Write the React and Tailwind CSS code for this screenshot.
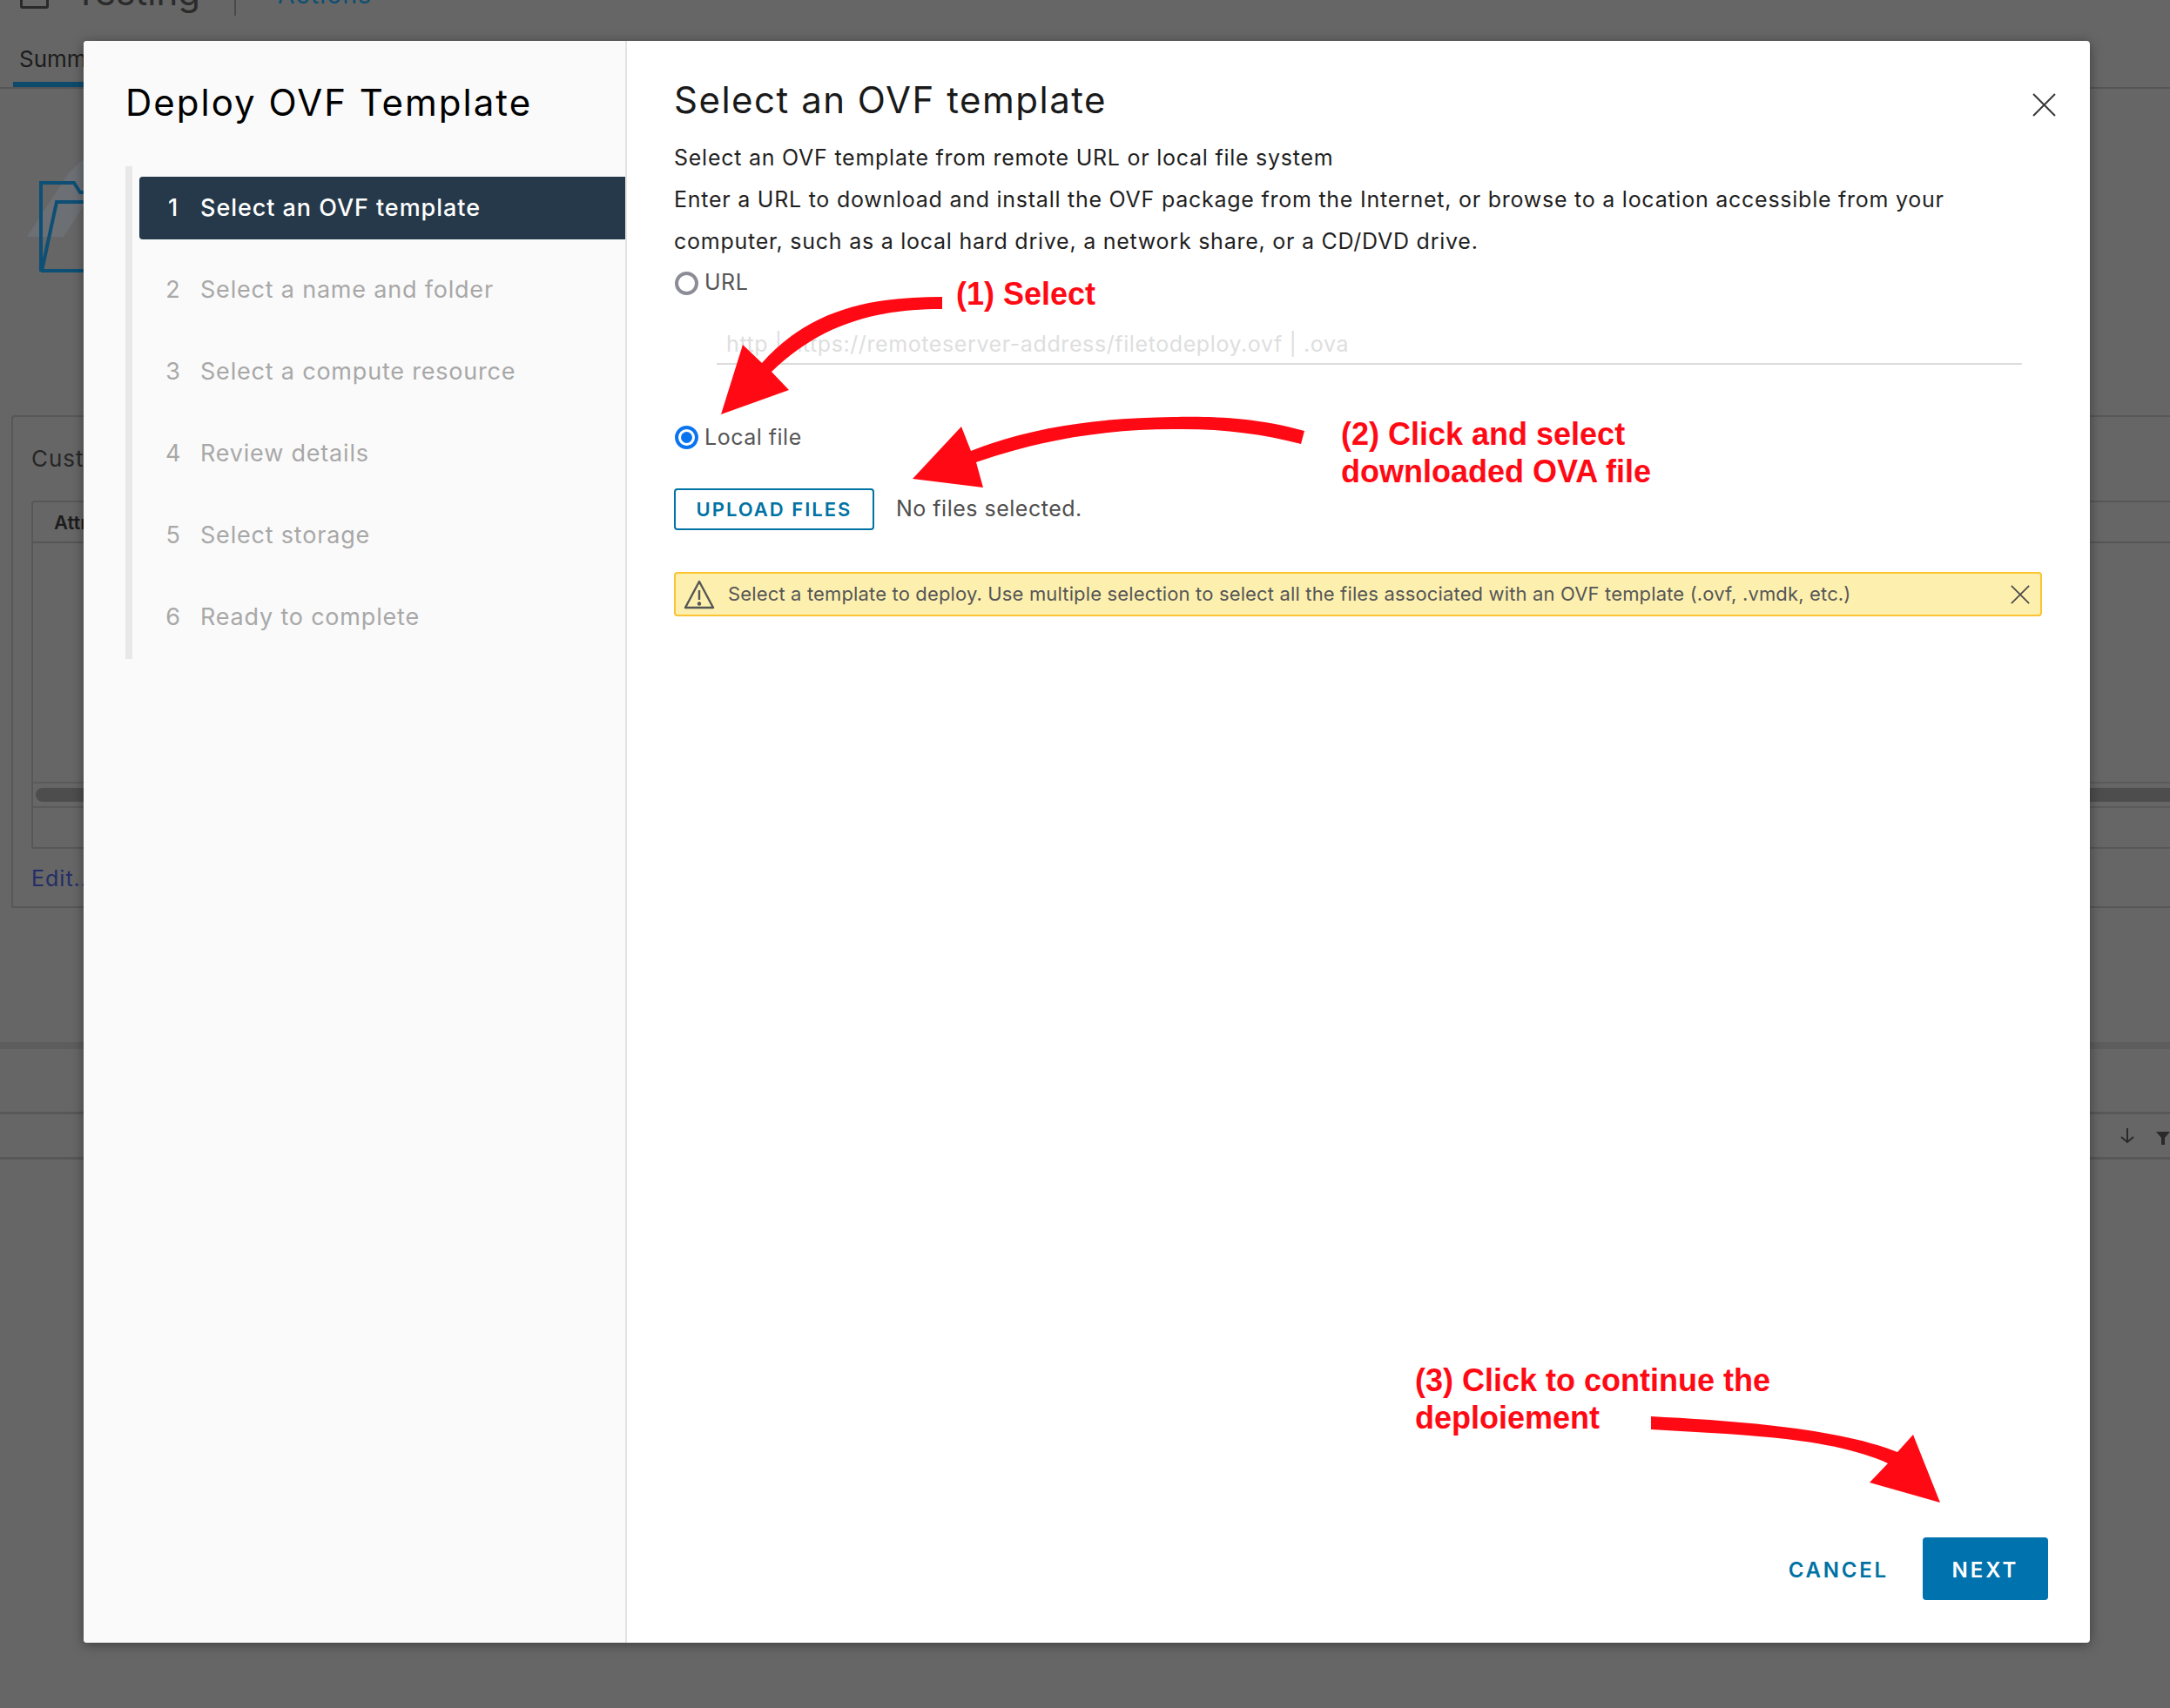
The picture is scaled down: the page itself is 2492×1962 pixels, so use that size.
import React from "react";

const font = "font-['Inter','Liberation_Sans',sans-serif]";

const steps = [
  "Select an OVF template",
  "Select a name and folder",
  "Select a compute resource",
  "Review details",
  "Select storage",
  "Ready to complete",
];

const CloseIcon = ({ className }) => (
  <svg viewBox="0 0 26 26" className={className} fill="none" stroke="currentColor" strokeWidth="2">
    <path d="M1 1 L25 25 M25 1 L1 25" />
  </svg>
);

const Background = () => (
  <div className="flex h-full flex-col text-[#1c1c1c]">
    <div className="flex h-[18px] items-end overflow-hidden pl-[23px]">
      <div className="mb-[8px] h-[40px] w-[33px] shrink-0 rounded-[3px] border-[3px] border-[#2a2a2a]" />
      <span className="mb-[7px] ml-[29px] text-[42px] leading-[40px] text-[#2b2b2b]">Testing</span>
      <div className="ml-[39px] h-full w-[2px] bg-[#4a4a4a]" />
      <span className="mb-[12px] ml-[48px] text-[28px] leading-[24px] tracking-[1.3px] text-[#0b4f73]">Actions</span>
    </div>
    <div className="h-[84px] border-b-2 border-[#555]">
      <div className="ml-[15px] flex h-[82px] w-[120px] items-center border-b-[6px] border-[#0d4a6b] pl-[7px] pt-[22px] text-[26px]">
        Summary
      </div>
    </div>
    <div className="h-[375px] pl-[30px] pt-[68px]">
      <svg viewBox="0 0 70 145" className="h-[145px] w-[70px]" fill="none" stroke="#0d4f75" strokeWidth="4">
        <path d="M1 102 L48 30 L68 10 L70 60 L43 102 Z" fill="#6c7074" stroke="none" />
        <path d="M17 142 V40 H55 L62 51 H70 M17 141 H70 M18 141 L35 62 H70" />
      </svg>
    </div>
    <div className="ml-[13px] flex h-[566px] flex-col rounded-tl-[4px] border-2 border-r-0 border-[#575757] pl-[21px]">
      <div className="h-[96px] pt-[28px] text-[26px] leading-[40px] tracking-[1px] text-[#262626]">Custom Attributes</div>
      <div className="flex h-[400px] flex-col rounded-tl-[4px] border-2 border-r-0 border-[#575757]">
        <div className="h-[47px] border-b-2 border-[#555] pl-[24px] pt-[7px] text-[22px] font-semibold">Attribute</div>
        <div className="h-[274px]" />
        <div className="flex h-[30px] items-center border-y-2 border-[#5a5a5a] pl-[3px]">
          <div className="h-[16px] w-full rounded-l-full bg-[#4d4d4d]" />
        </div>
      </div>
      <div className="pt-[16px] text-[25px] leading-[36px] tracking-[1px] text-[#232d66]">Edit...</div>
    </div>
    <div className="mt-[154px] h-[8px] bg-[#5d5d5d]" />
    <div className="mt-[72px] flex h-[55px] items-center justify-end gap-[25px] border-y-[3px] border-[#575757] text-[#2a2a2a]">
      <svg viewBox="0 0 16 18" className="h-[18px] w-[16px]" fill="none" stroke="currentColor" strokeWidth="2">
        <path d="M8 0 V16 M1 10 L8 16 L15 10" />
      </svg>
      <svg viewBox="0 0 16 16" className="mt-[4px] h-[16px] w-[16px]" fill="currentColor">
        <path d="M0 1 H16 L10 8 V16 H6 V8 Z" />
      </svg>
    </div>
  </div>
);

const App = () => {
  return (
    <div className={`relative h-[1962px] w-[2492px] overflow-hidden bg-[#666666] ${font}`}>
      <Background />

      {/* dialog */}
      <div className="absolute left-[96px] top-[47px] flex h-[1840px] w-[2304px] rounded-[4px] bg-white shadow-[0_2px_14px_rgba(0,0,0,0.4)]">
        <aside className="w-[624px] shrink-0 rounded-l-[4px] border-r-2 border-[#e4e4e4] bg-[#fafafa] pl-[48px]">
          <h1 className="pt-[43px] text-[42px] leading-[56px] tracking-[2px] text-black">Deploy OVF Template</h1>
          <nav className="mt-[45px] flex h-[566px] flex-col gap-[22px] border-l-8 border-[#e8e8e8] pl-[8px] pt-[12px]">
            {steps.map((step, i) => (
              <div
                key={step}
                className={
                  i === 0
                    ? "flex h-[72px] items-center rounded-l-[4px] bg-[#25394a] font-medium tracking-[0.95px] text-white"
                    : "flex h-[72px] items-center tracking-[0.8px] text-[#a8a8a8]"
                }
              >
                <span className="ml-[29px] w-[20px] text-center text-[27px]">{i + 1}</span>
                <span className="ml-[21px] text-[27px]">{step}</span>
              </div>
            ))}
          </nav>
        </aside>

        <main className="flex min-w-0 flex-1 flex-col pl-[54px] pr-[55px]">
          <div className="flex h-[106px] items-start justify-between">
            <h2 className="pt-[40px] text-[42px] leading-[56px] tracking-[1.5px] text-[#1a1a1a]">Select an OVF template</h2>
            <CloseIcon className="mr-[-16px] mt-[60px] h-[27px] w-[27px] text-[#3a3a3a]" />
          </div>
          <div className="text-[25px] leading-[48px] tracking-[0.75px] text-[#1f1f1f]">
            <p className="mt-[4px]">Select an OVF template from remote URL or local file system</p>
            <p>Enter a URL to download and install the OVF package from the Internet, or browse to a location accessible from your computer, such as a local hard drive, a network share, or a CD/DVD drive.</p>
          </div>

          <label className="flex h-[48px] items-center text-[25px] tracking-[0.5px] text-[#565656]">
            <span className="ml-[1px] h-[27px] w-[27px] rounded-full border-[4px] border-[#8c8c96] bg-white" />
            <span className="ml-[7px]">URL</span>
          </label>
          <div className="ml-[49px] mr-[23px] mt-[23px] h-[47px] border-b-2 border-[#dcdcdc] pl-[11px] text-[25px] leading-[46px] tracking-[0.6px] text-[#dedede]">
            http | https://remoteserver-address/filetodeploy.ovf | .ova
          </div>
          <label className="mt-[59px] flex h-[48px] items-center text-[25px] tracking-[0.5px] text-[#565656]">
            <span className="ml-[1px] flex h-[27px] w-[27px] items-center justify-center rounded-full border-[4px] border-[#0a74f0] bg-white">
              <span className="h-[13px] w-[13px] rounded-full bg-[#0a74f0]" />
            </span>
            <span className="ml-[7px] pt-[2px]">Local file</span>
          </label>
          <div className="mt-[35px] flex items-center">
            <button type="button" className="h-[48px] w-[230px] rounded-[4px] border-2 border-[#0072a3] text-[22px] font-semibold tracking-[2px] text-[#0072a3]">
              UPLOAD FILES
            </button>
            <span className="ml-[25px] text-[25px] tracking-[0.5px] text-[#4f4f4f]">No files selected.</span>
          </div>
          <div className="mt-[48px] flex h-[51px] items-center rounded-[4px] border-2 border-[#fcc433] bg-[#fdf0ae] pl-[9px] pr-[12px] text-[#565656]">
            <svg viewBox="0 0 36 34" className="h-[34px] w-[36px] shrink-0" fill="none" stroke="currentColor" strokeWidth="2.4" strokeLinejoin="round">
              <path d="M18 2 L34 32 H2 Z" />
              <path d="M18 12 V23" />
              <circle cx="18" cy="27.5" r="1" fill="currentColor" />
            </svg>
            <span className="ml-[15px] flex-1 text-[22px] tracking-[0.15px]">
              Select a template to deploy. Use multiple selection to select all the files associated with an OVF template (.ovf, .vmdk, etc.)
            </span>
            <CloseIcon className="h-[24px] w-[22px] shrink-0 text-[#4a4a4a]" />
          </div>

          <div className="mb-[49px] mr-[-7px] mt-auto flex items-center justify-end">
            <button type="button" className="mr-[39px] pt-[3px] text-[24px] font-semibold tracking-[2.8px] text-[#0072a3]">CANCEL</button>
            <button type="button" className="h-[72px] w-[144px] rounded-[4px] bg-[#0072ad] pt-[3px] text-[24px] font-semibold tracking-[3px] text-white">NEXT</button>
          </div>
        </main>
      </div>

      {/* red annotations pasted on top of the screenshot */}
      <svg viewBox="0 0 2492 1962" className="pointer-events-none absolute inset-0 h-full w-full" fill="#ff0a14">
        <path d="M1082 341 C 1000 341 930 355 875 417 L853 396 L828 476 L906 448 L886 427 C 940 375 1000 355 1082 355 Z" />
        <path d="M1498 495 C 1440 478 1380 478 1347 479 C 1270 480 1190 488 1115 518 L1104 490 L1048 550 L1129 560 L1121 531 C 1195 505 1270 493 1347 493 C 1400 492 1450 498 1494 510 Z" />
        <path d="M1896 1627 C 1990 1632 2110 1640 2179 1668 L2197 1648 L2228 1726 L2147 1703 L2168 1681 C 2100 1650 1990 1648 1896 1642 Z" />
      </svg>
      <div className="absolute left-[1098px] top-[316px] font-['Liberation_Sans',sans-serif] text-[36px] font-bold leading-[43px] text-[#ff0a14]">(1) Select</div>
      <div className="absolute left-[1540px] top-[477px] font-['Liberation_Sans',sans-serif] text-[36px] font-bold leading-[43px] text-[#ff0a14]">
        (2) Click and select<br />downloaded OVA file
      </div>
      <div className="absolute left-[1625px] top-[1564px] font-['Liberation_Sans',sans-serif] text-[36px] font-bold leading-[43px] text-[#ff0a14]">
        (3) Click to continue the<br />deploiement
      </div>
    </div>
  );
};

export default App;
